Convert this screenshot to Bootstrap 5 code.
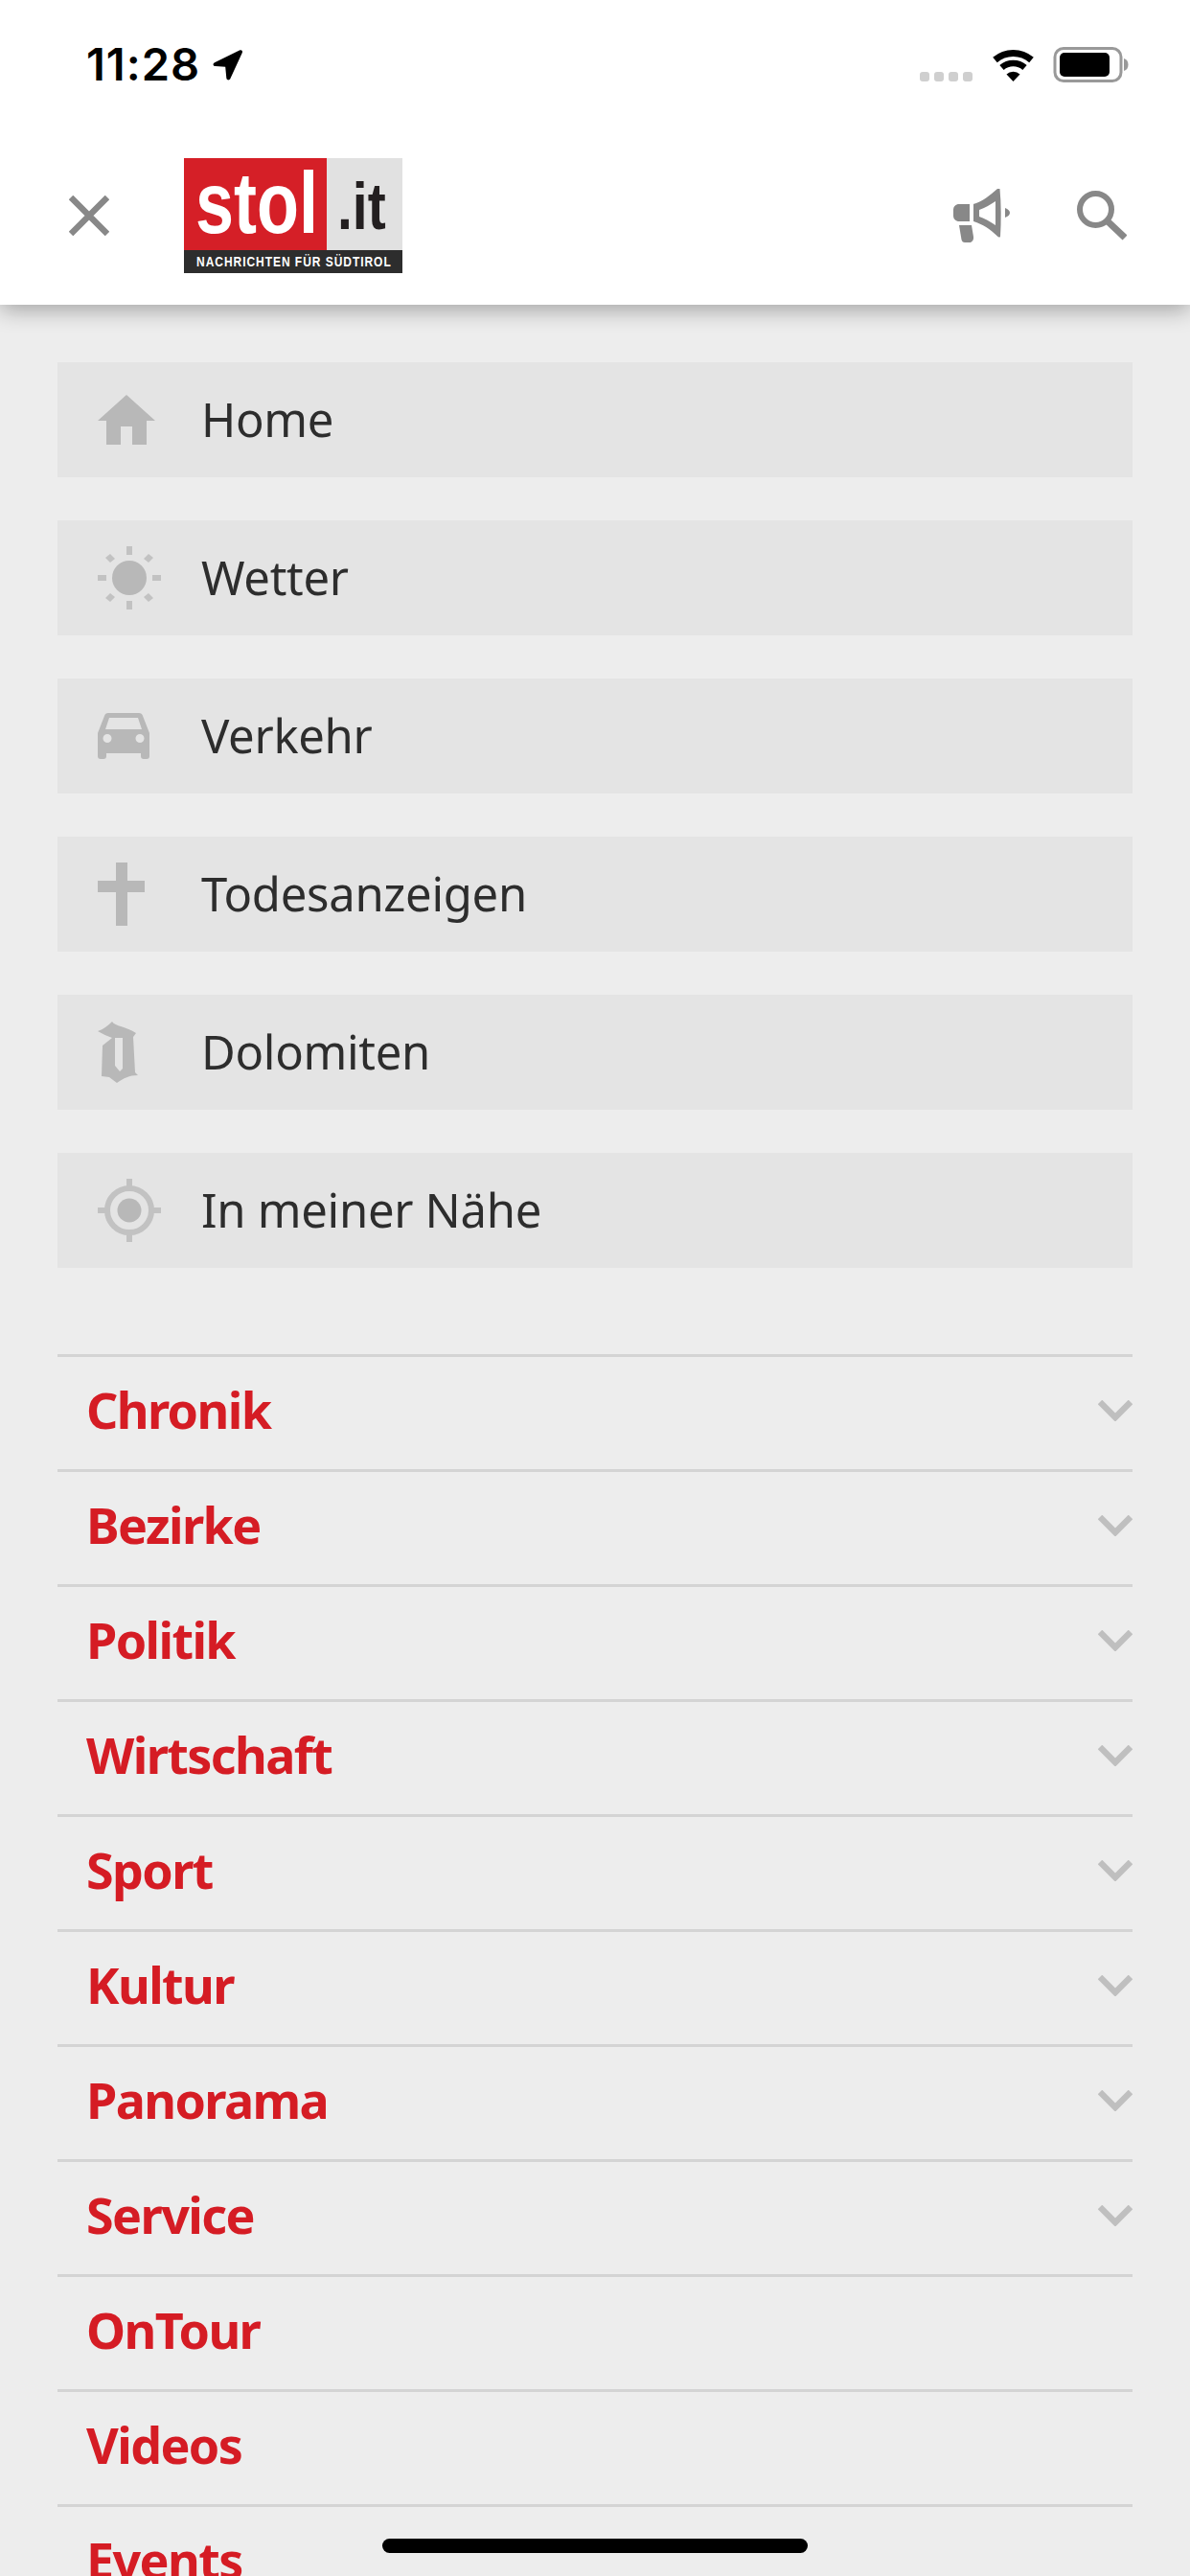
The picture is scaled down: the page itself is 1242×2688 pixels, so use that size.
<!DOCTYPE html>
<html lang="de">
<head>
  <meta charset="UTF-8">
  <title>stol.it Menü</title>
  <link href="https://cdn.jsdelivr.net/npm/bootstrap@5.3.0/dist/css/bootstrap.min.css" rel="stylesheet">
  <style>
    html, body { height: 2688px; overflow: hidden; }
    body { background-color: #ededed; font-family: "Noto Sans", sans-serif; position: relative; }
    .top-head { height: 318px; box-shadow: 0 5px 22px rgba(0,0,0,.32); position: relative; }
    .status-row { height: 132px; padding: 49px 63px 0 90px; }
    .clock { font-family: Inter, sans-serif; font-weight: 600; font-size: 47px; line-height: 36px; letter-spacing: 1px; color: #000; }
    .clock-arrow { margin-left: 13px; margin-top: 3px; }
    .signal-dots { gap: 5px; margin-top: 26px; margin-right: 19px; }
    .signal-dots span { width: 10px; height: 10px; border-radius: 3px; background-color: #cfcfcf; }
    .head-row { height: 186px; padding: 0 66px 0 72px; }
    .brand { width: 228px; height: 120px; margin-left: 78px; font-family: "Liberation Sans", sans-serif; font-weight: 700; }
    .brand-top { height: 96px; }
    .brand-red { width: 149px; background-color: #d51f27; color: #fff; font-size: 90px; line-height: 96px; }
    .brand-grey { width: 79px; background-color: #e1e1e1; color: #231f20; font-size: 68px; line-height: 96px; }
    .brand-red span, .brand-grey span { display: inline-block; transform-origin: left center; }
    .brand-red span { transform: translate(12px, -1px) scaleX(.8); }
    .brand-grey span { transform: translate(11px, 2px) scaleX(.84); }
    .brand-tag { height: 24px; background-color: #2d2d2d; color: #fff; font-size: 15px; line-height: 24px; padding-left: 13px; white-space: nowrap; }
    .brand-tag span { display: inline-block; transform-origin: left center; transform: scaleX(.8); letter-spacing: 1.2px; }
    .quick-list { padding: 60px 60px 0; gap: 45px; }
    .quick-item { height: 120px; background-color: #e4e4e4; color: #2d2d2d; padding-left: 42px; font-size: 49px; letter-spacing: -.3px; }
    .quick-ico { width: 108px; flex: none; display: flex; align-items: center; }
    .quick-ico svg { display: block; }
    .section-list { margin: 90px 60px 0; }
    .section-item { height: 120px; border-top: 3px solid #d4d4d4; padding: 0 0 8px 30px; color: #d51c24; font-size: 52px; font-weight: 700; letter-spacing: -1.6px; }
    .section-item svg { margin-top: 3px; }
    .search-ico { margin-left: 70px; }
    .home-bar { position: absolute; left: 399px; top: 2649px; width: 444px; height: 15px; border-radius: 8px; background-color: #000; }
  </style>
</head>
<body>

<header class="top-head bg-white">
  <div class="status-row d-flex justify-content-between align-items-start">
    <div class="d-flex align-items-start">
      <span class="clock">11:28</span>
      <svg class="clock-arrow" width="31" height="32" viewBox="0 0 31 32"><path d="M28 .6 2 13.2c-2.300 1.100-1.700 3.800.7 3.900l10.500.6 1.100 11.500c.2 2.500 3.100 3.100 4.100.8L30.700 3.300C31.600 1.200 30.200-.4 28 .6Z" fill="#000"/></svg>
    </div>
    <div class="d-flex align-items-start">
      <div class="signal-dots d-flex"><span></span><span></span><span></span><span></span></div>
      <svg width="47" height="36" viewBox="0 0 47 36" fill="none" stroke="#000">
        <path d="M4.500 13.500A29 29 0 0 1 42.500 13.500" stroke-width="7"/>
        <path d="M11.500 21.500A18 18 0 0 1 35.500 21.500" stroke-width="6.500"/>
        <path d="M23.500 36 16.500 28.500A10 10 0 0 1 30.500 28.500Z" fill="#000" stroke="none"/>
      </svg>
      <svg class="ms-3" width="82" height="38" viewBox="0 0 82 38">
        <rect x="4" y="1.500" width="69" height="34" rx="9" fill="none" stroke="#999" stroke-width="3"/>
        <rect x="9" y="6" width="52" height="25" rx="5" fill="#000"/>
        <path d="M76 12c3 .8 4.500 3.300 4.500 6.500S79 24.200 76 25Z" fill="#999"/>
      </svg>
    </div>
  </div>
  <div class="head-row d-flex align-items-center">
    <svg width="42" height="42" viewBox="0 0 42 42" stroke="#888" stroke-width="6.500"><path d="M2 2 40 40M40 2 2 40"/></svg>
    <div class="brand d-flex flex-column">
      <div class="brand-top d-flex">
        <div class="brand-red"><span>stol</span></div>
        <div class="brand-grey"><span>.it</span></div>
      </div>
      <div class="brand-tag"><span>NACHRICHTEN FÜR SÜDTIROL</span></div>
    </div>
    <div class="ms-auto d-flex align-items-center">
      <svg width="59" height="56" viewBox="0 0 59 56" fill="#888">
        <path d="M6 16h11v18H6c-3.500 0-6-2.500-6-6v-6c0-3.500 2.500-6 6-6Z"/>
        <path fill-rule="evenodd" d="M21 16C31 13 38 7 46 0h2.500C50 16 50 34 49 50c-1 1-2 .500-3-.500C38 42 31 37 21 34ZM27 22v7c6 2 11 5 17 9V13c-6 4-11 7-17 9Z"/>
        <path d="M6 38h13l2 12c.500 3-1 5-3 6h-6c-2 0-3-1-3.500-3Z"/>
        <path d="M54 20c3 1 5 3 5 5s-2 4-5 5Z"/>
      </svg>
      <svg class="search-ico" width="52" height="52" viewBox="0 0 52 52" fill="none" stroke="#888" stroke-width="6"><circle cx="19.500" cy="19.500" r="16.500"/><path d="M31 31 50 49" stroke-width="7"/></svg>
    </div>
  </div>
</header>

<nav class="quick-list d-flex flex-column">
  <a href="#" class="quick-item d-flex align-items-center text-decoration-none">
    <span class="quick-ico"><svg width="60" height="52" viewBox="0 0 60 52" fill="#b8b8b8"><path d="M30 0 60 27H51V52H36V33H24V52H9V27H0Z"/></svg></span>Home
  </a>
  <a href="#" class="quick-item d-flex align-items-center text-decoration-none">
    <span class="quick-ico"><svg width="66" height="66" viewBox="0 0 66 66" fill="#c2c2c2">
      <circle cx="33" cy="33" r="18" fill="#b8b8b8"/>
      <rect x="30" y="0" width="6" height="9"/><rect x="30" y="57" width="6" height="9"/>
      <rect x="0" y="30" width="9" height="6"/><rect x="57" y="30" width="9" height="6"/>
      <path d="M13 8 18 13 13 17 8 12ZM53 8 58 12 53 17 48 13ZM13 49 18 53 13 58 8 54ZM53 49 58 54 53 58 48 53Z"/>
    </svg></span>Wetter
  </a>
  <a href="#" class="quick-item d-flex align-items-center text-decoration-none">
    <span class="quick-ico"><svg width="54" height="48" viewBox="0 0 54 48" fill="#b8b8b8"><path fill-rule="evenodd" d="M11 0H43C45 0 46.500 1 47 3L54 21V45C54 47 53 48 51 48H48C46 48 45 47 45 45V42H9V45C9 47 8 48 6 48H3C1 48 0 47 0 45V21L7 3C7.500 1 9 0 11 0ZM12 5 8 17H46L42 5ZM10 22A4.500 4.500 0 1 0 10 31 4.500 4.500 0 1 0 10 22ZM44 22A4.500 4.500 0 1 0 44 31 4.500 4.500 0 1 0 44 22Z"/></svg></span>Verkehr
  </a>
  <a href="#" class="quick-item d-flex align-items-center text-decoration-none">
    <span class="quick-ico"><svg width="49" height="66" viewBox="0 0 49 66" fill="#b8b8b8"><path d="M19 0H31V19H49V31H31V66H19V31H0V19H19Z"/></svg></span>Todesanzeigen
  </a>
  <a href="#" class="quick-item d-flex align-items-center text-decoration-none">
    <span class="quick-ico"><svg width="42" height="64" viewBox="0 0 42 64" fill="#b8b8b8"><path fill-rule="evenodd" d="M0 10C6 8 11 4 15 0 18 5 30 5 40 12L37 16 39 53 42 56C33 56 27 59 20 64L12 58 4 57 5 25 15 17C10 15 5 13 0 10ZM18 17V46L23 52 26 49V17Z"/></svg></span>Dolomiten
  </a>
  <a href="#" class="quick-item d-flex align-items-center text-decoration-none">
    <span class="quick-ico"><svg width="66" height="66" viewBox="0 0 66 66" fill="none" stroke="#c2c2c2">
      <circle cx="33" cy="33" r="23" stroke-width="6"/>
      <path d="M33 0V10M33 56V66M0 33H10M56 33H66" stroke-width="6"/>
      <circle cx="33" cy="33" r="12.500" fill="#b8b8b8" stroke="none"/>
    </svg></span>In meiner Nähe
  </a>
</nav>

<nav class="section-list d-flex flex-column">
  <a href="#" class="section-item d-flex align-items-center justify-content-between text-decoration-none">Chronik<svg width="36" height="22" viewBox="0 0 36 22" fill="none" stroke="#bfbfbf" stroke-width="6.500"><path d="M2 2 18 18 34 2"/></svg></a>
  <a href="#" class="section-item d-flex align-items-center justify-content-between text-decoration-none">Bezirke<svg width="36" height="22" viewBox="0 0 36 22" fill="none" stroke="#bfbfbf" stroke-width="6.500"><path d="M2 2 18 18 34 2"/></svg></a>
  <a href="#" class="section-item d-flex align-items-center justify-content-between text-decoration-none">Politik<svg width="36" height="22" viewBox="0 0 36 22" fill="none" stroke="#bfbfbf" stroke-width="6.500"><path d="M2 2 18 18 34 2"/></svg></a>
  <a href="#" class="section-item d-flex align-items-center justify-content-between text-decoration-none">Wirtschaft<svg width="36" height="22" viewBox="0 0 36 22" fill="none" stroke="#bfbfbf" stroke-width="6.500"><path d="M2 2 18 18 34 2"/></svg></a>
  <a href="#" class="section-item d-flex align-items-center justify-content-between text-decoration-none">Sport<svg width="36" height="22" viewBox="0 0 36 22" fill="none" stroke="#bfbfbf" stroke-width="6.500"><path d="M2 2 18 18 34 2"/></svg></a>
  <a href="#" class="section-item d-flex align-items-center justify-content-between text-decoration-none">Kultur<svg width="36" height="22" viewBox="0 0 36 22" fill="none" stroke="#bfbfbf" stroke-width="6.500"><path d="M2 2 18 18 34 2"/></svg></a>
  <a href="#" class="section-item d-flex align-items-center justify-content-between text-decoration-none">Panorama<svg width="36" height="22" viewBox="0 0 36 22" fill="none" stroke="#bfbfbf" stroke-width="6.500"><path d="M2 2 18 18 34 2"/></svg></a>
  <a href="#" class="section-item d-flex align-items-center justify-content-between text-decoration-none">Service<svg width="36" height="22" viewBox="0 0 36 22" fill="none" stroke="#bfbfbf" stroke-width="6.500"><path d="M2 2 18 18 34 2"/></svg></a>
  <a href="#" class="section-item d-flex align-items-center text-decoration-none">OnTour</a>
  <a href="#" class="section-item d-flex align-items-center text-decoration-none">Videos</a>
  <a href="#" class="section-item d-flex align-items-center text-decoration-none">Events</a>
</nav>

<div class="home-bar"></div>

<script src="https://cdn.jsdelivr.net/npm/bootstrap@5.3.0/dist/js/bootstrap.bundle.min.js"></script>
</body>
</html>
